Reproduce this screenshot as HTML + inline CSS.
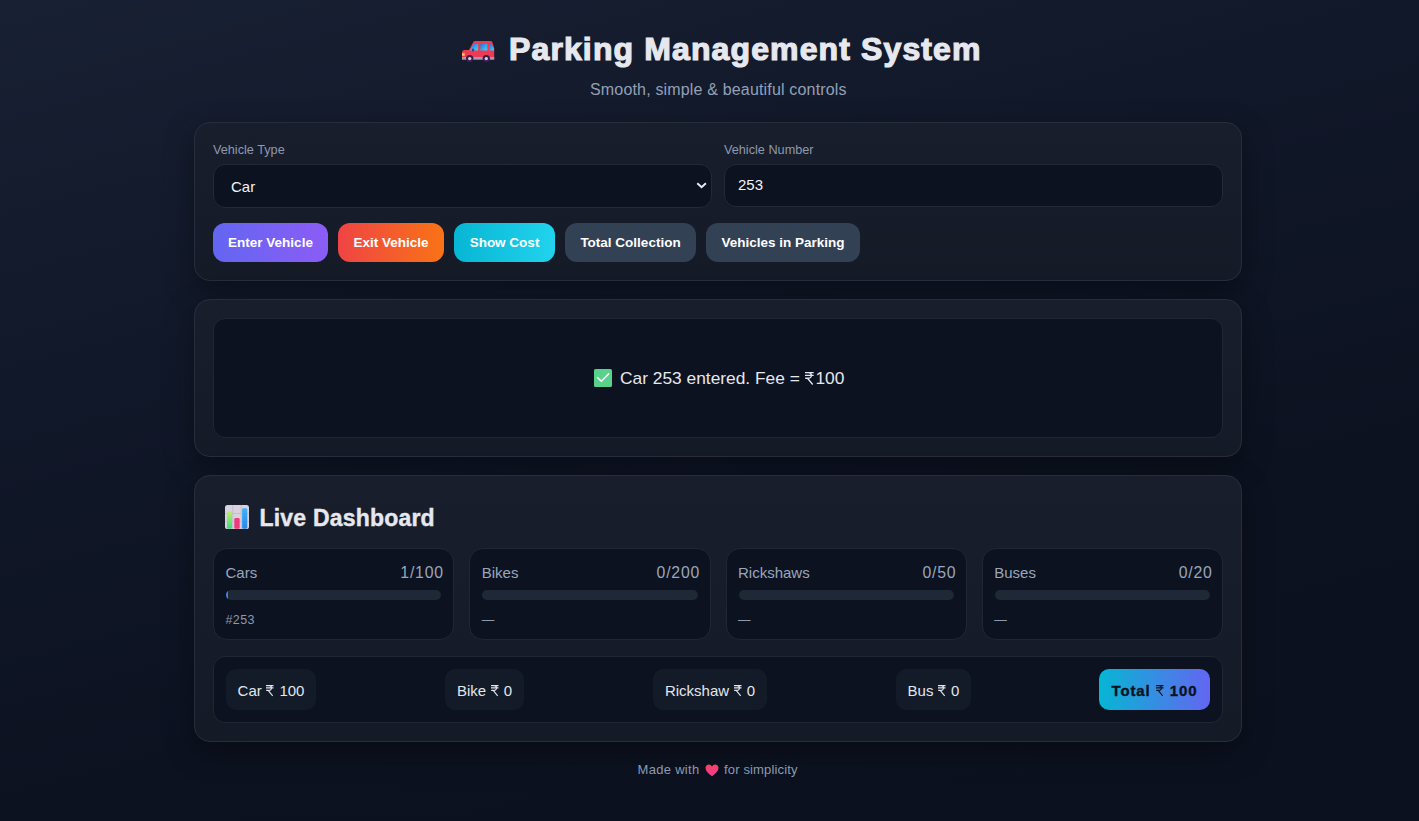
<!DOCTYPE html>
<html><head><meta charset="utf-8">
<style>
*{box-sizing:border-box;margin:0;padding:0}
html,body{width:1419px;height:821px;overflow:hidden}
body{font-family:"Liberation Sans",sans-serif;background:linear-gradient(165deg,#182033 0%,#111829 33%,#0c1220 68%,#0b111f 100%);color:#e5e7eb;position:relative}
.abs{position:absolute}
.card{position:absolute;left:194px;width:1048px;border:1px solid #262e3d;border-radius:16px;background:linear-gradient(180deg,#181e2c,#141a26);box-shadow:0 10px 30px rgba(0,0,0,.35)}
.t{position:absolute;white-space:nowrap;line-height:1}
.title{left:509px;top:33px;font-size:32px;font-weight:700;letter-spacing:1.12px;color:#e6e8ee;-webkit-text-stroke:1.2px #e6e8ee}
.sub{left:590px;top:81.5px;font-size:16px;letter-spacing:0.17px;color:#93a0b6}
.lbl{font-size:12.7px;color:#8d99ad}
.field{position:absolute;background:#0c1220;border:1px solid #222a38;border-radius:12px}
.btn{position:absolute;top:100px;height:39px;border-radius:12px;color:#fff;font-weight:700;font-size:13.5px;display:flex;align-items:center;justify-content:center}
.stat{position:absolute;top:72px;width:241.25px;height:92px;background:#0c1220;border:1px solid #1f2735;border-radius:14px}
.stat .n{position:absolute;left:11.5px;top:16px;font-size:15px;color:#9aa6ba;line-height:1}
.stat .v{position:absolute;right:9.4px;top:15.6px;font-size:15.8px;letter-spacing:0.8px;color:#9aa6ba;line-height:1}
.bar{position:absolute;left:12px;right:12px;top:41px;height:10px;border-radius:6px;background:#1f2837;overflow:hidden}
.stat .d{position:absolute;left:11.5px;top:65px;font-size:12.5px;letter-spacing:0.4px;color:#8d99ad;line-height:1}
.pill{position:absolute;top:12px;height:41px;border-radius:10px;background:#131a28;color:#e2e6ee;font-size:15px;display:flex;align-items:center;justify-content:center;padding-top:2px}
.rs{display:inline-block;vertical-align:baseline;width:0.5em;height:0.72em;margin:0 0.1em 0 0.02em;overflow:visible}
</style></head>
<body>
<!-- header -->
<svg class="abs" style="left:458px;top:36px" width="40" height="30" viewBox="0 0 40 30">
  <defs><linearGradient id="wg" x1="0" y1="0" x2="1" y2="1"><stop offset="0" stop-color="#2a6fdc"/><stop offset="1" stop-color="#3ed6f8"/></linearGradient></defs>
  <path d="M4 16.5 Q4 13.9 6.5 13.9 L11 13.9 L15.6 5.6 Q16.2 4.9 17.5 4.9 L32.5 4.9 Q33.8 4.9 34.4 6.2 L36.2 12 L36.2 23.5 L4 23.5 Z" fill="#ee3a52"/>
  <path d="M11.6 14.6 L15.9 7.7 L20.1 7.7 L20.1 14.6 Z" fill="url(#wg)"/>
  <rect x="22.3" y="7.7" width="7" height="6.8" rx="0.6" fill="url(#wg)"/>
  <path d="M31.4 7.7 L33.4 7.7 L36 13 L36 14.5 L31.4 14.5 Z" fill="url(#wg)"/>
  <rect x="4" y="21" width="32.2" height="2.6" fill="#a596b8"/>
  <rect x="4" y="17.2" width="2.7" height="2.6" fill="#f5d040"/>
  <rect x="14.3" y="12.4" width="1.4" height="3" rx="0.7" fill="#3a1d48"/>
  <circle cx="11.7" cy="22.6" r="3.7" fill="#3a1f4a"/><circle cx="11.7" cy="22.6" r="1.7" fill="#dcc8f0"/>
  <circle cx="28.3" cy="22.6" r="3.7" fill="#3a1f4a"/><circle cx="28.3" cy="22.6" r="1.7" fill="#dcc8f0"/>
</svg>
<div class="t title">Parking Management System</div>
<div class="t sub">Smooth, simple &amp; beautiful controls</div>

<!-- card 1 -->
<div class="card" style="top:122px;height:159px">
  <div class="t lbl" style="left:18px;top:21.2px">Vehicle Type</div>
  <div class="t lbl" style="left:529px;top:21.2px">Vehicle Number</div>
  <div class="field" style="left:18px;top:41px;width:499px;height:43.5px">
    <div class="t" style="left:17px;top:13.5px;font-size:15px;color:#f1f3f7">Car</div>
    <svg class="abs" style="left:481.5px;top:17.3px" width="12" height="8" viewBox="0 0 12 8"><path d="M1.3 1.3 L5.6 5.3 L9.9 1.3" stroke="#eceef2" stroke-width="1.9" fill="none"/></svg>
  </div>
  <div class="field" style="left:529px;top:41px;width:499px;height:42.6px">
    <div class="t" style="left:13px;top:11.8px;font-size:15px;color:#f1f3f7">253</div>
  </div>
  <div class="btn" style="left:18px;width:115px;background:linear-gradient(90deg,#6366f1,#8b5cf6)">Enter Vehicle</div>
  <div class="btn" style="left:143px;width:106px;background:linear-gradient(90deg,#ef4444,#f97316)">Exit Vehicle</div>
  <div class="btn" style="left:259px;width:101px;background:linear-gradient(90deg,#06b6d4,#22d3ee)">Show Cost</div>
  <div class="btn" style="left:370px;width:131px;background:#334155">Total Collection</div>
  <div class="btn" style="left:511px;width:154px;background:#334155">Vehicles in Parking</div>
</div>

<!-- card 2 -->
<div class="card" style="top:299px;height:158px">
  <div class="field" style="left:18px;top:18px;width:1010px;height:120px;border-color:#1f2735">
  </div>
  <svg class="abs" style="left:399px;top:69px" width="18" height="18" viewBox="0 0 18 18">
    <rect x="0" y="0" width="18" height="18" rx="1.6" fill="#58d28a"/>
    <path d="M3.5 8.6 L7.3 12.2 L14.6 4.9" stroke="#fbf4ff" stroke-width="1.5" stroke-linecap="round" stroke-linejoin="round" fill="none"/>
  </svg>
  <div class="t" style="left:425px;top:70px;font-size:17.35px;color:#e5e8ee">Car 253 entered. Fee = <svg class="rs" viewBox="0 0 9 13" preserveAspectRatio="none"><path d="M0 0.7H9M0 3.5H9M3.6 0.7C7.6 0.7 7.6 6.5 3.6 6.5H0.2M2.6 6.5L8 13" stroke="currentColor" stroke-width="1.35" fill="none"/></svg>100</div>
</div>

<!-- card 3 -->
<div class="card" style="top:475px;height:267px">
  <svg class="abs" style="left:30px;top:29px" width="24" height="24" viewBox="0 0 24 24">
    <defs><linearGradient id="gg" x1="0" y1="0" x2="0" y2="1"><stop offset="0" stop-color="#c0f060"/><stop offset="1" stop-color="#3ed884"/></linearGradient>
    <linearGradient id="bg2" x1="0" y1="0" x2="0" y2="1"><stop offset="0" stop-color="#3eb2fa"/><stop offset="1" stop-color="#2b86e6"/></linearGradient></defs>
    <rect x="0" y="0" width="24" height="24" rx="2.6" fill="#d9d3df"/>
    <path d="M0 8.5H24M0 16.4H24M7.8 0V24M16.2 0V24" stroke="#bdb6c6" stroke-width="0.7"/>
    <rect x="1.9" y="6" width="5.2" height="17.8" rx="1.4" fill="url(#gg)"/>
    <rect x="9.3" y="13" width="5.4" height="10.8" rx="1.4" fill="#ee3a7e"/>
    <rect x="17.1" y="3.2" width="5.2" height="20.6" rx="1.4" fill="url(#bg2)"/>
  </svg>
  <div class="t" style="left:64.5px;top:31px;font-size:23px;font-weight:700;letter-spacing:0.2px;color:#e6e8ee;-webkit-text-stroke:0.4px #e6e8ee">Live Dashboard</div>

  <div class="stat" style="left:18px">
    <div class="n">Cars</div><div class="v">1/100</div>
    <div class="bar"><div style="width:1%;height:100%;background:#3b82f6"></div></div>
    <div class="d">#253</div>
  </div>
  <div class="stat" style="left:274.25px">
    <div class="n">Bikes</div><div class="v">0/200</div>
    <div class="bar"></div>
    <div class="d">—</div>
  </div>
  <div class="stat" style="left:530.5px">
    <div class="n">Rickshaws</div><div class="v">0/50</div>
    <div class="bar"></div>
    <div class="d">—</div>
  </div>
  <div class="stat" style="left:786.75px">
    <div class="n">Buses</div><div class="v">0/20</div>
    <div class="bar"></div>
    <div class="d">—</div>
  </div>

  <div class="field" style="left:18px;top:180px;width:1010px;height:67px;border-color:#1f2735">
    <div class="pill" style="left:12px;width:90px"><span>Car <svg class="rs" viewBox="0 0 9 13" preserveAspectRatio="none"><path d="M0 0.7H9M0 3.5H9M3.6 0.7C7.6 0.7 7.6 6.5 3.6 6.5H0.2M2.6 6.5L8 13" stroke="currentColor" stroke-width="1.35" fill="none"/></svg> 100</span></div>
    <div class="pill" style="left:231px;width:79px"><span>Bike <svg class="rs" viewBox="0 0 9 13" preserveAspectRatio="none"><path d="M0 0.7H9M0 3.5H9M3.6 0.7C7.6 0.7 7.6 6.5 3.6 6.5H0.2M2.6 6.5L8 13" stroke="currentColor" stroke-width="1.35" fill="none"/></svg> 0</span></div>
    <div class="pill" style="left:439px;width:114px"><span>Rickshaw <svg class="rs" viewBox="0 0 9 13" preserveAspectRatio="none"><path d="M0 0.7H9M0 3.5H9M3.6 0.7C7.6 0.7 7.6 6.5 3.6 6.5H0.2M2.6 6.5L8 13" stroke="currentColor" stroke-width="1.35" fill="none"/></svg> 0</span></div>
    <div class="pill" style="left:682px;width:75px"><span>Bus <svg class="rs" viewBox="0 0 9 13" preserveAspectRatio="none"><path d="M0 0.7H9M0 3.5H9M3.6 0.7C7.6 0.7 7.6 6.5 3.6 6.5H0.2M2.6 6.5L8 13" stroke="currentColor" stroke-width="1.35" fill="none"/></svg> 0</span></div>
    <div class="pill" style="left:885px;width:111px;background:linear-gradient(90deg,#06b6d4,#6366f1);color:#0b1220;font-weight:700;letter-spacing:0.85px;-webkit-text-stroke:0.35px #0b1220"><span>Total <svg class="rs" viewBox="0 0 9 13" preserveAspectRatio="none"><path d="M0 0.7H9M0 3.5H9M3.6 0.7C7.6 0.7 7.6 6.5 3.6 6.5H0.2M2.6 6.5L8 13" stroke="currentColor" stroke-width="1.35" fill="none"/></svg> 100</span></div>
  </div>
</div>

<!-- footer -->
<div class="t" style="left:637.5px;top:763px;font-size:13px;letter-spacing:0.3px;color:#8d9ab0">Made with</div>
<svg class="abs" style="left:704.5px;top:763.5px" width="14" height="12.8" viewBox="0 0 14 12" preserveAspectRatio="none">
  <defs><linearGradient id="hg" x1="0" y1="0" x2="0" y2="1"><stop offset="0" stop-color="#f2455a"/><stop offset="1" stop-color="#f03a98"/></linearGradient></defs>
  <path d="M7 11.5 C3 8.5 0.5 6.5 0.5 3.7 C0.5 1.8 2 0.5 3.8 0.5 C5.2 0.5 6.3 1.3 7 2.4 C7.7 1.3 8.8 0.5 10.2 0.5 C12 0.5 13.5 1.8 13.5 3.7 C13.5 6.5 11 8.5 7 11.5Z" fill="url(#hg)"/>
</svg>
<div class="t" style="left:724px;top:763px;font-size:13px;letter-spacing:0.15px;color:#8d9ab0">for simplicity</div>
</body></html>
